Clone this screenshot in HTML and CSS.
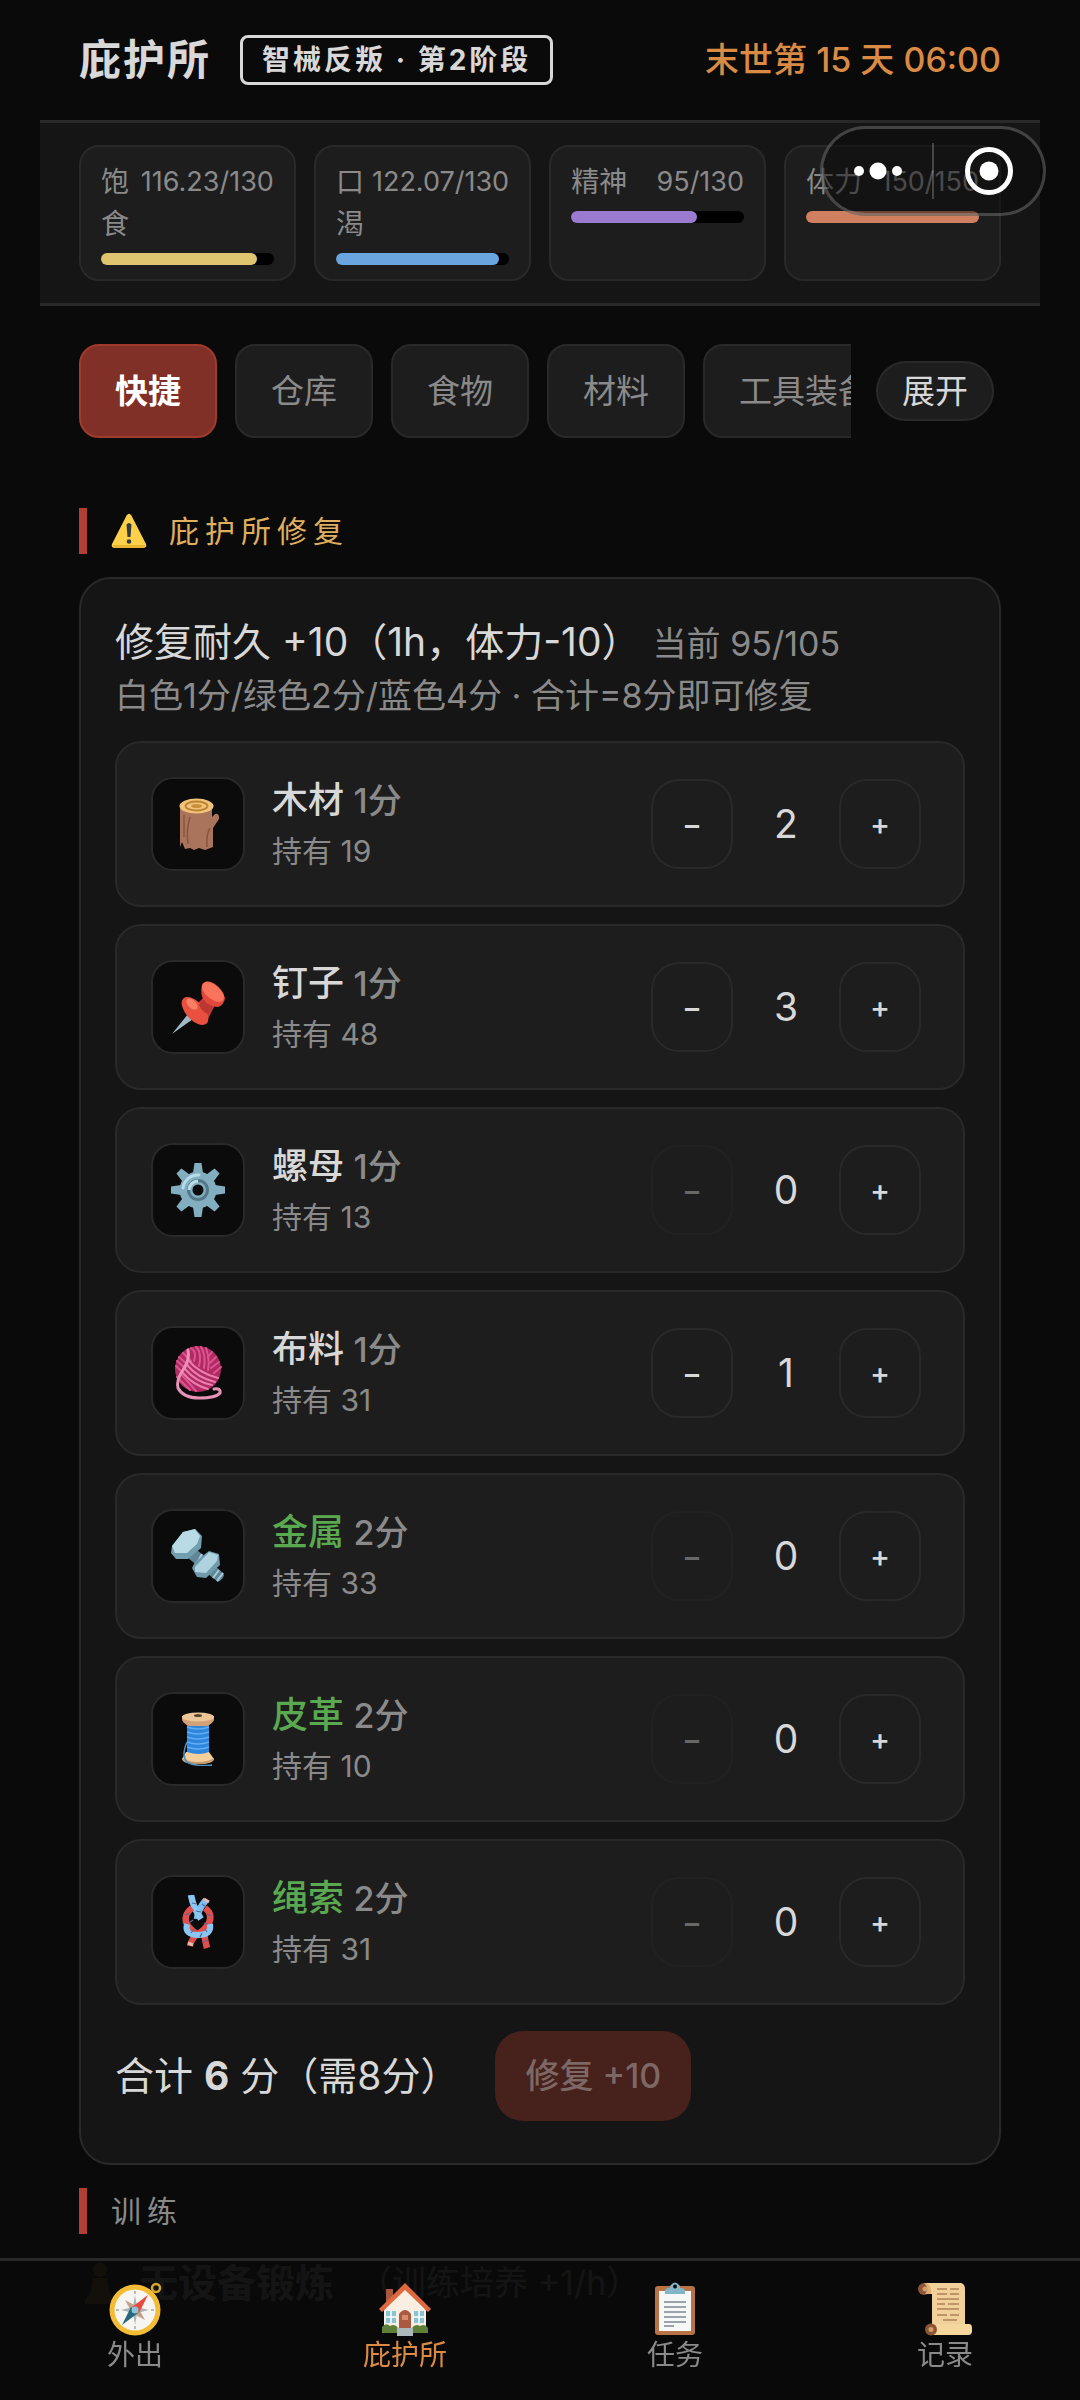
FILE: index.html
```
<!DOCTYPE html>
<html lang="zh-CN">
<head>
    <meta charset="UTF-8">
    <meta name="viewport" content="width=device-width, initial-scale=1.0">
    <title>庇护所</title>
    <link rel="stylesheet" href="styles.css">
</head>
<body>
    <header class="topbar">
        <h1>庇护所</h1>
        <span class="stage">智械反叛 · 第2阶段</span>
        <span class="clock">末世第 15 天 06:00</span>
    </header>

    <section class="stats">
        <div class="stat">
            <div class="stat-text"><span class="stat-name">饱食</span><span class="stat-value">116.23/130</span></div>
            <div class="bar"><div class="fill food" style="width: 90%"></div></div>
        </div>
        <div class="stat">
            <div class="stat-text"><span class="stat-name">口渴</span><span class="stat-value">122.07/130</span></div>
            <div class="bar"><div class="fill water" style="width: 94%"></div></div>
        </div>
        <div class="stat">
            <div class="stat-text"><span class="stat-name">精神</span><span class="stat-value">95/130</span></div>
            <div class="bar"><div class="fill mind" style="width: 73%"></div></div>
        </div>
        <div class="stat">
            <div class="stat-text"><span class="stat-name">体力</span><span class="stat-value">150/150</span></div>
            <div class="bar"><div class="fill energy" style="width: 100%"></div></div>
        </div>
    </section>

    <!-- Mini-Programm Kapsel, liegt über den Werten -->
    <div class="capsule">
        <button type="button" aria-label="更多">
            <svg width="56" height="24" viewBox="0 0 56 24" fill="#fff"><circle cx="9" cy="12" r="5"/><circle cx="28" cy="12" r="8.5"/><circle cx="47" cy="12" r="5"/></svg>
        </button>
        <button type="button" aria-label="关闭">
            <svg width="50" height="50" viewBox="0 0 50 50"><circle cx="25" cy="25" r="21.5" fill="none" stroke="#fff" stroke-width="5"/><circle cx="25" cy="25" r="9.5" fill="#fff"/></svg>
        </button>
    </div>

    <main>
        <div class="tabs-row">
            <nav class="tabs">
                <button type="button" class="tab active">快捷</button>
                <button type="button" class="tab">仓库</button>
                <button type="button" class="tab">食物</button>
                <button type="button" class="tab">材料</button>
                <button type="button" class="tab">工具装备</button>
            </nav>
            <button type="button" class="expand">展开</button>
        </div>

        <h2 class="section-title warn">
            <svg width="36" height="36" viewBox="0 0 36 36"><path d="M15.6 2.4Q18-.8 20.400 2.400L35 31Q36.200 35 32 35H4Q-.2 35 1 31Z" fill="#fdd049"/><path d="M2 32Q2 35 5 35H31Q34 35 34 32Z" fill="#e9b52f"/><path d="M15.500 11.500Q18 8.500 20.500 11.500L19.500 24H16.500Z" fill="#333b3e"/><circle cx="18" cy="28.500" r="2.300" fill="#333b3e"/></svg>
            <span>庇护所修复</span>
        </h2>

        <section class="card">
            <p class="card-title">修复耐久 +10（1h，体力-10）<small>当前 95/105</small></p>
            <p class="card-hint">白色1分/绿色2分/蓝色4分 · 合计=8分即可修复</p>

            <ul class="items">
                <li class="item">
                    <div class="item-icon">
                        <svg width="54" height="54" viewBox="0 0 54 54"><path d="M9 8V50l2-5 3 7 5-1 4 2 5-2 6 2 8-3V31l6-9V19q-2-4-5-1l-2 2V8Z" fill="#a9745b"/><path d="M19 20Q15 33 17 47M36 50q-1-12 3-19M13 18v22" fill="none" stroke="#875440" stroke-width="1.500"/><ellipse cx="25.500" cy="9" rx="17" ry="7.500" fill="#f0c27a"/><ellipse cx="25.500" cy="9" rx="11" ry="4.500" fill="none" stroke="#bc8430" stroke-width="1.800"/><ellipse cx="25.500" cy="9" rx="5.500" ry="2" fill="#c99139"/></svg>
                    </div>
                    <div class="item-info"><p class="name">木材 <span>1分</span></p><p class="own">持有 19</p></div>
                    <div class="stepper"><button type="button">−</button><output>2</output><button type="button">+</button></div>
                </li>
                <li class="item">
                    <div class="item-icon">
                        <svg width="54" height="54" viewBox="0 0 54 54"><path d="M17 34l5 5L1 54Z" fill="#9fb9c5"/><path d="M27 23l9-9 8 11-7 14Z" fill="#c63a36"/><ellipse cx="24" cy="31" rx="9" ry="17" transform="rotate(-43 24 31)" fill="#e9503f"/><ellipse cx="21" cy="24" rx="4" ry="7" transform="rotate(-43 21 24)" fill="#f77f63"/><path d="M28 25l7-9 8 9-6 9q-6-2-9-9Z" fill="#bc3632"/><path d="M31 5q4-7 13-1 8 6 10 14-1 7-7 9-9 0-15-8-3-7-1-14Z" fill="#e2493b"/><ellipse cx="42" cy="12" rx="7" ry="13" transform="rotate(-50 42 12)" fill="#f8745c"/></svg>
                    </div>
                    <div class="item-info"><p class="name">钉子 <span>1分</span></p><p class="own">持有 48</p></div>
                    <div class="stepper"><button type="button">−</button><output>3</output><button type="button">+</button></div>
                </li>
                <li class="item">
                    <div class="item-icon">
                        <svg width="54" height="54" viewBox="0 0 54 54"><g fill="#82aec0"><path id="tooth" d="M22 10 23.500 0h7L32 10v34l-1.500 10h-7L22 44Z"/><use href="#tooth" transform="rotate(45 27 27)"/><use href="#tooth" transform="rotate(90 27 27)"/><use href="#tooth" transform="rotate(135 27 27)"/><circle cx="27" cy="27" r="18.500"/></g><path d="M12 25a15 15 0 0 1 16-13" fill="none" stroke="#b5dbe8" stroke-width="3" stroke-linecap="round"/><circle cx="27" cy="27" r="9.500" fill="none" stroke="#52798a" stroke-width="3"/><path d="M18 27a9 9 0 0 1 9-9" fill="none" stroke="#b9deea" stroke-width="3"/><circle cx="27" cy="27" r="5.500" fill="#0b0b0b"/></svg>
                    </div>
                    <div class="item-info"><p class="name">螺母 <span>1分</span></p><p class="own">持有 13</p></div>
                    <div class="stepper"><button type="button" disabled>−</button><output>0</output><button type="button">+</button></div>
                </li>
                <li class="item">
                    <div class="item-icon">
                        <svg width="54" height="54" viewBox="0 0 54 54"><circle cx="27" cy="23" r="23" fill="#b02a63"/><g fill="none" stroke="#dd5590" stroke-width="2" stroke-linecap="round"><path d="M20 2q6 4 3 13M25 1q6 5 3 19M30 1q5 8 3 21M35 2q4 10 2 22"/><path d="M8 11l9 8M6 15l8 7M5 20l6 6M12 7l8 8"/><path d="M18 15q10 12 29 17M16 19q11 13 28 17M14 23q11 13 27 16M12 27q10 12 25 16" stroke="#ea7dab"/><path d="M48 16l-8 6M50 21l-7 6M45 11l-6 6M41 6l-4 5M6 31l13 13M11 29l14 16"/></g><path d="M17 4q2 10-5 20T7 42q5 10 21 10 17 0 21-5 1-5-6-4" fill="none" stroke="#e893b5" stroke-width="3" stroke-linecap="round"/></svg>
                    </div>
                    <div class="item-info"><p class="name">布料 <span>1分</span></p><p class="own">持有 31</p></div>
                    <div class="stepper"><button type="button">−</button><output>1</output><button type="button">+</button></div>
                </li>
                <li class="item">
                    <div class="item-icon">
                        <svg width="54" height="54" viewBox="0 0 54 54"><path d="M25 20l27 24q3 4-5 9L17 29Z" fill="#5f8797"/><path d="M31 25l-5 9M36 29l-6 9M48 41l-6 8M52 44l-6 8" stroke="#a8ccd7" stroke-width="2"/><path d="M24 33l14-11 10 3 1 11-14 13-9-1-5-9Z" fill="#6e9aab"/><path d="M24 38l14-15 9 3-1 6-11 12-11-1Z" fill="#aed3df"/><path d="M1 17L12 3 24 0l7 7-1 12-13 11H5L0 24Z" fill="#729eae"/><path d="M1 17L12 3 24 0l5 7-3 8-10 9H4Z" fill="#b8dbe5"/></svg>
                    </div>
                    <div class="item-info"><p class="name green">金属 <span>2分</span></p><p class="own">持有 33</p></div>
                    <div class="stepper"><button type="button" disabled>−</button><output>0</output><button type="button">+</button></div>
                </li>
                <li class="item">
                    <div class="item-icon">
                        <svg width="54" height="54" viewBox="0 0 54 54"><path d="M15 40L11 47q1 5 16 5t16-5l-5-7Z" fill="#f2cf9b"/><path d="M11 46q1 6 16 6t16-6q-6 4-16 4t-16-4Z" fill="#c79a6e"/><path d="M16 10h22v30q-10 4-22 0Z" fill="#2f86dd"/><path d="M16 15q11 4 22 0M16 20q11 4 22 0M16 25q11 4 22 0M16 30q11 4 22 0M16 35q11 4 22 0" fill="none" stroke="#62aef4" stroke-width="1.500"/><path d="M11 4v4q2 4 7 6h18q5-2 7-6V4Z" fill="#d3a077"/><ellipse cx="27" cy="5" rx="16" ry="4.500" fill="#edc698"/><ellipse cx="27" cy="3.500" rx="4" ry="1.500" fill="#5d442e"/><path d="M16 30q-6 14 0 20 8 5 25 3" fill="none" stroke="#5591bd" stroke-width="1.500"/></svg>
                    </div>
                    <div class="item-info"><p class="name green">皮革 <span>2分</span></p><p class="own">持有 10</p></div>
                    <div class="stepper"><button type="button" disabled>−</button><output>0</output><button type="button">+</button></div>
                </li>
                <li class="item">
                    <div class="item-icon">
                        <svg width="54" height="54" viewBox="0 0 54 54" fill="none"><path d="M19 51q1-7 8-12" stroke="#df504d" stroke-width="6"/><path d="M33 37q1 9 3 16" stroke="#df504d" stroke-width="6.500"/><path d="M35 5q-8 9-9 19" stroke="#7fbdf0" stroke-width="6.500"/><path d="M20 0q2 12 10 24" stroke="#8ac6f3" stroke-width="6.500"/><path d="M21 13q-8 6-6 14 3 7 11 12M34 13q8 6 4 15-3 6-11 11" stroke="#df504d" stroke-width="6.500"/><path d="M16 29q-3 11 11 11t12-11" stroke="#8ac6f3" stroke-width="6"/><path d="M21 8l5 1M25 16l5 1M31 9l4 3M14 20l5-2M18 28l4-3M36 19l4 2M33 28l4 1M20 38l3-4M29 42l2-4M36 37l-2-3M32 47l5-2" stroke="#55699a" stroke-width="1.200"/><path d="M17 48l5 2M33 4l5 3" stroke="#eab9ad" stroke-width="3"/></svg>
                    </div>
                    <div class="item-info"><p class="name green">绳索 <span>2分</span></p><p class="own">持有 31</p></div>
                    <div class="stepper"><button type="button" disabled>−</button><output>0</output><button type="button">+</button></div>
                </li>
            </ul>

            <div class="card-footer">
                <p>合计 <b>6</b> 分（需8分）</p>
                <button type="button" class="repair" disabled>修复 +10</button>
            </div>
        </section>

        <h2 class="section-title">训练</h2>
        <p class="training">
            <svg width="30" height="42" viewBox="0 0 30 42" fill="#c98a3c"><circle cx="15" cy="8" r="7"/><path d="M8 16h14l3 16 5 6v4H0v-4l5-6Z"/></svg>
            <b>无设备锻炼</b><span>（训练培养 +1/h）</span>
        </p>
    </main>

    <nav class="bottom-nav">
        <a href="#">
            <svg width="54" height="54" viewBox="0 0 54 54"><circle cx="48" cy="6" r="4" fill="none" stroke="#d8a72d" stroke-width="2.500"/><circle cx="27" cy="28" r="25.500" fill="#f2bc34"/><circle cx="27" cy="28" r="20.500" fill="#f7f5f1"/><path d="M27 13l2 12 12 3-12 3-2 12-2-12-12-3 12-3Z" fill="#a9b4b5"/><path d="M17 18l13 7 7 13-13-7Z" fill="#c3a38e"/><path d="M40 13l-9 18-7-6Z" fill="#e54a43"/><path d="M14 43l9-18 7 6Z" fill="#276681"/><circle cx="27" cy="28" r="3.500" fill="#8ac4d9"/><path d="M27 9v3M27 44v3M8 28h3M43 28h3" stroke="#bbb" stroke-width="2"/></svg>
            外出
        </a>
        <a href="#" class="current">
            <svg width="54" height="54" viewBox="0 0 54 54"><path d="M8 7h7v16H8Z" fill="#a9583f"/><path d="M27 3L48 28V48H6V28Z" fill="#f8eee1"/><path d="M27 1L1 27l3 3L27 8l23 22 3-3Z" fill="#e0683e"/><g fill="#8ac3d4"><path d="M8 29h10v12H8ZM36 29h10v12H36Z"/></g><path d="M13 29v12M8 35h10M41 29v12M36 35h10" stroke="#fff" stroke-width="1.500"/><path d="M21 49V32q6-8 12 0v17Z" fill="#a95a40"/><path d="M24 33h6v5h-6Z" fill="#d58b6e"/><path d="M4 51V45q4-5 8-1 5-3 8 2v5ZM34 51v-5q3-5 8-2 5-3 8 2v5Z" fill="#5f8137"/><path d="M19 46h16v8H19Z" fill="#adb8bd"/></svg>
            庇护所
        </a>
        <a href="#">
            <svg width="54" height="54" viewBox="0 0 54 54"><rect x="7" y="4" width="40" height="49" rx="3" fill="#b77345"/><path d="M11 9h32v40H11Z" fill="#f6f7f7"/><path d="M16 20h22M16 25h22M16 30h22M16 35h22M16 40h22M16 44h10" stroke="#9ba4ac" stroke-width="1.800"/><path d="M17 12V9q0-3 5-3V4q5-7 10 0v2q5 0 5 3v3Z" fill="#82b4ca"/><circle cx="27" cy="4.500" r="2" fill="#0b0b0b"/></svg>
            任务
        </a>
        <a href="#">
            <svg width="54" height="54" viewBox="0 0 54 54"><path d="M6 1h37q4 1 4 6v38H14V12H6Z" fill="#f2d099"/><circle cx="6" cy="7" r="6" fill="#8b5638"/><circle cx="7" cy="7" r="2.500" fill="#d39c68"/><path d="M6 1q7 1 7 7v4H7q5-5-1-11Z" fill="#dfaf73"/><path d="M19 7h10M32 7h9M19 12h10M32 12h9M19 17h22M19 22h8M30 22h11M19 27h22M19 33h10M32 33h9M25 38h14" stroke="#bd9567" stroke-width="1.800"/><path d="M12 42h39q3 0 3 4v3q0 4-4 4H13Z" fill="#f5d69c"/><circle cx="13" cy="47.500" r="6" fill="#8b5638"/><circle cx="13" cy="47.500" r="2.500" fill="#d39c68"/></svg>
            记录
        </a>
    </nav>
</body>
</html>
```

FILE: styles.css
```
* {
    box-sizing: border-box;
}
html, body {
    height: 100%;
    overflow: hidden;
}
body {
    margin: 0;
    background: #0a0a0a;
    color: #d8d8d8;
    font-family: Inter, "Noto Sans CJK SC", sans-serif;
    font-size: 34px;
    line-height: 52px;
}
h1, h2, p, ul {
    margin: 0;
    padding: 0;
    font-weight: 400;
}
button {
    font: inherit;
    color: inherit;
    padding: 0;
    cursor: pointer;
}
svg {
    display: block;
    flex: none;
}
.topbar {
    display: flex;
    align-items: center;
    height: 120px;
    padding: 0 79px;
}
.topbar h1 {
    font-size: 42px;
    font-weight: 700;
    letter-spacing: 2px;
}
.stage {
    margin-left: 29px;
    padding: 0 19px;
    border: 3px solid #d8d8d8;
    border-radius: 8px;
    font-size: 28px;
    font-weight: 700;
    line-height: 44px;
    letter-spacing: 3px;
}
.clock {
    margin-left: auto;
    color: #d98a45;
    font-weight: 500;
}
.stats {
    display: grid;
    grid-template-columns: repeat(4, 1fr);
    gap: 18px;
    margin: 0 40px;
    padding: 22px 39px;
    background: #151515;
    border-top: 3px solid #292929;
    border-bottom: 3px solid #292929;
}
.stat {
    padding: 14px 20px;
    background: #1d1d1d;
    border: 2px solid #292929;
    border-radius: 20px;
    color: #8a8a8a;
    line-height: 42px;
}
.stat-text {
    display: flex;
    justify-content: space-between;
    gap: 8px;
}
.stat-name {
    font-size: 28px;
}
.stat-value {
    font-size: 27px;
}
.bar {
    height: 12px;
    margin-top: 8px;
    border-radius: 6px;
    background: #000;
}
.fill {
    height: 100%;
    border-radius: 6px;
}
.food { background: #e0c570; }
.water { background: #6ba5e0; }
.mind { background: #9a7bd0; }
.energy { background: #d08060; }

.capsule {
    position: absolute;
    top: 126px;
    right: 34px;
    display: flex;
    align-items: center;
    width: 226px;
    height: 90px;
    background: rgba(10, 10, 10, 0.5);
    border: 3px solid rgba(255, 255, 255, 0.22);
    border-radius: 45px;
}
.capsule button {
    display: flex;
    flex: 1;
    justify-content: center;
    align-items: center;
    height: 56px;
    background: none;
    border: 0;
}
.capsule button + button {
    border-left: 2px solid rgba(255, 255, 255, 0.22);
}
main {
    padding: 38px 79px 0;
}
.tabs-row {
    display: flex;
    align-items: center;
    gap: 25px;
    padding-right: 7px;
}
.tabs {
    display: flex;
    flex: 1;
    gap: 18px;
    min-width: 0;
    overflow: hidden;
}
.tab {
    flex: none;
    height: 94px;
    padding: 0 34px;
    background: #1d1d1d;
    border: 2px solid #292929;
    border-radius: 20px;
    color: #8a8a8a;
    font-size: 33px;
}
.tab.active {
    background: #803026;
    border-color: #a03a2c;
    color: #fff;
    font-weight: 700;
}
.expand {
    height: 60px;
    padding: 0 24px;
    background: #1d1d1d;
    border: 2px solid #292929;
    border-radius: 30px;
    font-size: 33px;
}
.section-title {
    display: flex;
    gap: 22px;
    align-items: center;
    height: 46px;
    margin: 23px 0;
    padding-left: 24px;
    border-left: 8px solid #b04035;
    color: #8a8a8a;
    font-size: 30px;
    letter-spacing: 6px;
}
.warn {
    margin-top: 70px;
    color: #dfae5f;
}
.card {
    padding: 37px 34px 42px;
    background: #151515;
    border: 2px solid #292929;
    border-radius: 32px;
}
.card-title {
    font-size: 39px;
}
.card-title small {
    margin-left: 12px;
    color: #8a8a8a;
    font-size: 34px;
}
.card-hint {
    color: #8a8a8a;
}
.items {
    display: grid;
    gap: 17px;
    margin: 19px 0 26px;
    list-style: none;
}
.item {
    display: flex;
    align-items: center;
    height: 166px;
    padding: 0 42px 0 34px;
    background: #1d1d1d;
    border: 2px solid #292929;
    border-radius: 26px;
}
.item-icon {
    display: flex;
    align-items: center;
    justify-content: center;
    width: 94px;
    height: 94px;
    background: #0b0b0b;
    border: 2px solid #292929;
    border-radius: 22px;
}
.item-info {
    flex: 1;
    margin-left: 27px;
}
.name {
    font-size: 36px;
    font-weight: 500;
}
.name span {
    color: #8a8a8a;
    font-size: 34px;
}
.green {
    color: #5aa850;
}
.own {
    color: #8a8a8a;
    font-size: 30px;
    line-height: 48px;
}
.stepper {
    display: flex;
    align-items: center;
}
.stepper button {
    width: 82px;
    height: 90px;
    background: none;
    border: 2px solid #292929;
    border-radius: 28px;
    font-size: 30px;
    font-weight: 500;
}
.stepper button:disabled {
    opacity: 0.4;
}
.stepper output {
    width: 106px;
    text-align: center;
    font-size: 39px;
}
.card-footer {
    display: flex;
    align-items: center;
    gap: 36px;
    font-size: 39px;
}
.repair {
    height: 90px;
    padding: 0 30px;
    background: #47211c;
    border: 0;
    border-radius: 28px;
    color: #7d6865;
    font-size: 34px;
    font-weight: 500;
}
.training {
    display: flex;
    align-items: center;
    gap: 24px;
    padding-left: 6px;
    font-size: 39px;
}
.training span {
    font-size: 34px;
}
.bottom-nav {
    position: fixed;
    bottom: 0;
    left: 0;
    right: 0;
    display: flex;
    height: 142px;
    padding-top: 21px;
    background: rgba(10, 10, 10, 0.95);
    border-top: 3px solid #292929;
}
.bottom-nav a {
    display: flex;
    flex: 1;
    flex-direction: column;
    align-items: center;
    color: #8a8a8a;
    font-size: 28px;
    line-height: 38px;
    text-decoration: none;
}
.bottom-nav .current {
    color: #d98a45;
}
```
